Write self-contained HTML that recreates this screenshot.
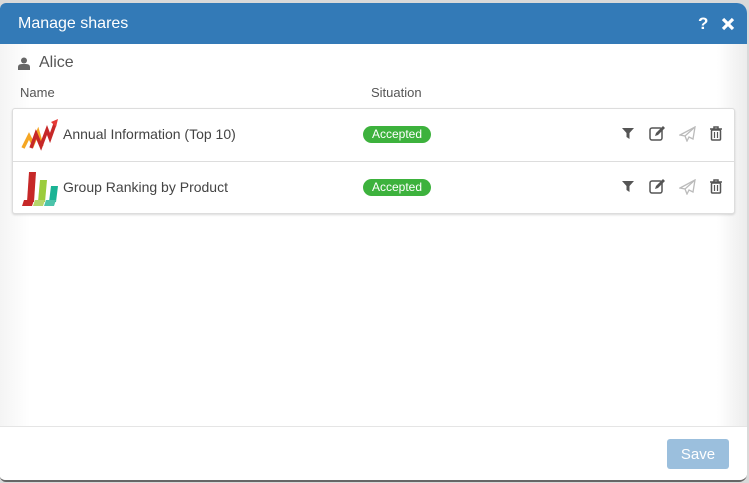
<!DOCTYPE html>
<html><head><meta charset="utf-8"><style>
*{box-sizing:border-box;margin:0;padding:0}
body{width:749px;height:483px;background:#fff;font-family:"Liberation Sans",sans-serif;position:relative;overflow:hidden}
#frame{position:absolute;left:0;top:0;width:749px;height:483px;background:#d9d9d9}
#dlg{position:absolute;left:0;top:3px;width:747px;height:479px;background:#fff;border-radius:6px 10px 8px 6px;overflow:hidden;border-bottom:2px solid #666}
#hd{height:41px;background:#337ab7;color:#fff;font-size:16px;line-height:41px;padding-left:18px}
#hd .ic{position:absolute;top:0;font-weight:bold;font-size:17px}
#body{position:absolute;top:41px;left:0;right:0;height:382px;background:linear-gradient(to right,#f4f4f4 0,#fff 30px,#fff 717px,#ececec 747px)}
#ft{position:absolute;top:423px;left:0;right:0;bottom:0;border-top:1px solid #e5e5e5;background:#fff}
.save{position:absolute;left:667px;top:12px;width:62px;height:30px;background:#9bbfdd;border-radius:3px;color:#fff;font-size:15px;text-align:center;line-height:32px}
.user{position:absolute;left:18px;top:10px;font-size:16px;color:#555;display:flex;align-items:center}
.th{position:absolute;top:41px;font-size:13px;color:#555}
#tbl{position:absolute;left:12px;top:64px;width:723px;height:106px;border:1px solid #ddd;border-radius:3px;box-shadow:0 1px 2px rgba(0,0,0,.15);background:#fff}
.row{position:absolute;left:0;right:0;height:52px}
.row+.row{border-top:1px solid #ddd}
.nm{position:absolute;left:50px;top:0;line-height:50px;font-size:14px;color:#444}
.badge{position:absolute;left:350px;top:17px;width:68px;height:17px;border-radius:9px;background:#3db23d;color:#fff;font-size:12px;text-align:center;line-height:17px}
.acts{position:absolute;left:608px;top:17px}
.acts svg{position:absolute;top:0}
</style></head><body>
<div id="frame"></div>
<div id="dlg">
 <div id="hd">Manage shares<span class="ic" style="left:698px">?</span>
 <svg style="position:absolute;left:721px;top:14px" width="14" height="14"><path d="M2 2L12 12M12 2L2 12" stroke="#fff" stroke-width="3.2"/></svg></div>
 <div id="body">
  <div class="user"><svg width="12" height="13" viewBox="0 0 12 13"><circle cx="6" cy="3.5" r="3" fill="#666"/><path d="M0 13V10Q0 7 4 7H8Q12 7 12 10V13Z" fill="#666"/></svg><span style="margin-left:9px">Alice</span></div>
  <div class="th" style="left:20px">Name</div>
  <div class="th" style="left:371px">Situation</div>
  <div id="tbl">
   <div class="row" style="top:0">
    <svg style="position:absolute;left:8px;top:9px" width="38" height="34" viewBox="0 0 38 34">
     <path d="M2 30L8 18L12 26L17 14L21 28" stroke="#f5a623" stroke-width="3.5" fill="none"/>
     <path d="M10 30L15 16L20 28L26 12L29 20L34 6" stroke="#c62828" stroke-width="3.5" fill="none"/>
     <path d="M30 4L37 1L35 9Z" fill="#e53935"/>
    </svg>
    <div class="nm">Annual Information (Top 10)</div>
    <div class="badge">Accepted</div>
    <div class="acts">
     <svg style="left:0" width="14" height="14"><path d="M1 2H13L8.5 7V13L5.5 11V7Z" fill="#555"/></svg>
     <svg style="left:28px" width="17" height="15"><rect x="1" y="2" width="12" height="12" rx="2" fill="none" stroke="#555" stroke-width="1.5"/><path d="M6 10L7 7L14 0L16 2L9 9Z" fill="#555"/></svg>
     <svg style="left:58px" width="17" height="16"><path d="M16 1L1 9L6 10L8 15L10 11L14 13Z" fill="none" stroke="#bbb" stroke-width="1.3"/><path d="M6 10L16 1" stroke="#bbb" stroke-width="1.2"/></svg>
     <svg style="left:88px" width="14" height="15"><path d="M1 3H13M5 3V1H9V3" stroke="#555" stroke-width="1.5" fill="none"/><rect x="2.5" y="4" width="9" height="10" rx="1" fill="none" stroke="#555" stroke-width="1.5"/><path d="M5.5 6V12M8.5 6V12" stroke="#555" stroke-width="1.2"/></svg>
    </div>
   </div>
   <div class="row" style="top:52px">
    <svg style="position:absolute;left:8px;top:8px" width="38" height="36" viewBox="0 0 38 36">
     <path d="M8 2H15L13 32H6Z" fill="#c62828"/><path d="M3 30H13L11 36H1Z" fill="#c62828"/>
     <path d="M19 10H26L24 32H17Z" fill="#9ccc3c"/><path d="M14 30H24L22 36H12Z" fill="#b5d56a"/>
     <path d="M30 16H37L35 32H28Z" fill="#1ab394"/><path d="M25 30H35L33 36H23Z" fill="#4cc3aa"/>
    </svg>
    <div class="nm">Group Ranking by Product</div>
    <div class="badge">Accepted</div>
    <div class="acts">
     <svg style="left:0" width="14" height="14"><path d="M1 2H13L8.5 7V13L5.5 11V7Z" fill="#555"/></svg>
     <svg style="left:28px" width="17" height="15"><rect x="1" y="2" width="12" height="12" rx="2" fill="none" stroke="#555" stroke-width="1.5"/><path d="M6 10L7 7L14 0L16 2L9 9Z" fill="#555"/></svg>
     <svg style="left:58px" width="17" height="16"><path d="M16 1L1 9L6 10L8 15L10 11L14 13Z" fill="none" stroke="#bbb" stroke-width="1.3"/><path d="M6 10L16 1" stroke="#bbb" stroke-width="1.2"/></svg>
     <svg style="left:88px" width="14" height="15"><path d="M1 3H13M5 3V1H9V3" stroke="#555" stroke-width="1.5" fill="none"/><rect x="2.5" y="4" width="9" height="10" rx="1" fill="none" stroke="#555" stroke-width="1.5"/><path d="M5.5 6V12M8.5 6V12" stroke="#555" stroke-width="1.2"/></svg>
    </div>
   </div>
  </div>
 </div>
 <div id="ft"><div class="save">Save</div></div>
</div>
</body></html>
